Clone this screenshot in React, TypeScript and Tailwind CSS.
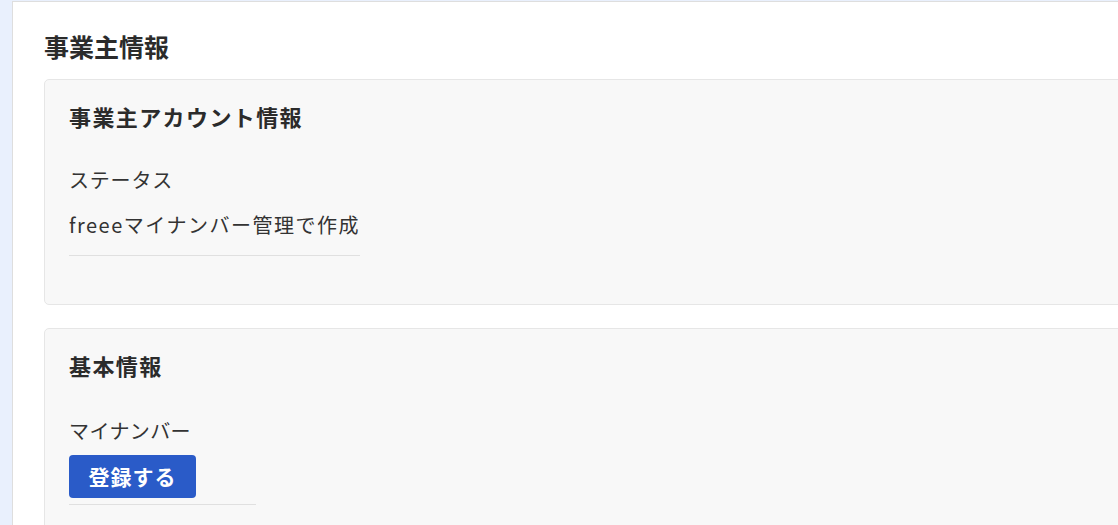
const font = "font-['Noto_Sans_CJK_JP','Noto_Sans',sans-serif]";

const Card: React.FC<{ title: string; children: React.ReactNode; className?: string }> = ({ title, children, className }) => (
  <section className={`-mr-6 rounded-[5px] border border-[#e6e6e6] bg-[#f8f8f8] pl-6 pt-5 ${className ?? ''}`}>
    <h2 className="text-[22px] leading-8 font-bold tracking-[1.4px] text-[#2b2b2b]">{title}</h2>
    {children}
  </section>
);

export default function App() {
  return (
    <div className={`flex min-h-screen overflow-hidden bg-[#e9f0fd] text-[#333] ${font}`}>
      <div className="w-3 shrink-0" />
      <main className="mt-px min-w-0 flex-1 overflow-hidden border-l border-t border-[#dedede] bg-white pl-[31px] pt-[26px]">
        <h1 className="text-[25px] leading-9 font-bold text-[#2b2b2b]">事業主情報</h1>

        <Card title="事業主アカウント情報" className="mt-[15px] pb-12">
          <dl className="mt-[33px] inline-block border-b border-[#e0e0e0] pb-[15px]">
            <dt className="text-[20px] leading-[30px] tracking-[0.8px]">ステータス</dt>
            <dd className="mt-[15px] text-[20px] leading-[30px] tracking-[1.5px]">freeeマイナンバー管理で作成</dd>
          </dl>
        </Card>

        <Card title="基本情報" className="mt-[23px] pb-12">
          <dl className="mt-[35px] w-[187px] border-b border-[#e0e0e0] pb-[6px]">
            <dt className="text-[20px] leading-[30px] tracking-[0.4px]">マイナンバー</dt>
            <dd className="mt-[9px]">
              <button className="h-[43px] w-[127px] rounded-[4px] bg-[#2a5bc8] text-[21px] font-bold tracking-[1px] text-white">
                登録する
              </button>
            </dd>
          </dl>
        </Card>
      </main>
    </div>
  );
}
